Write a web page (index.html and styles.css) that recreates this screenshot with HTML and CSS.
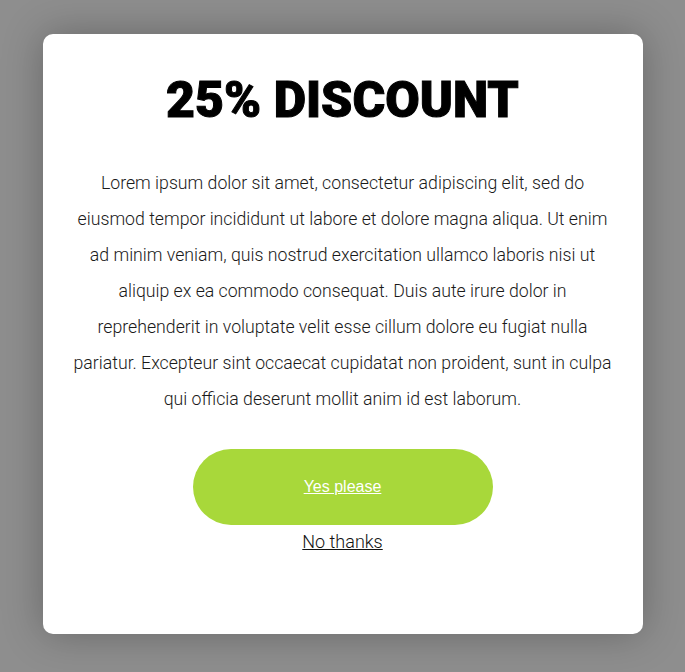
FILE: index.html
```html
<!DOCTYPE html>
<html>
<head>
<meta charset="utf-8">
<link rel="stylesheet" href="styles.css">
</head>
<body>
<div class="page">
  <div class="modal">
    <h1 class="title">25% DISCOUNT</h1>
    <p class="text">Lorem ipsum dolor sit amet, consectetur adipiscing elit, sed do eiusmod tempor incididunt ut labore et dolore magna aliqua. Ut enim ad minim veniam, quis nostrud exercitation ullamco laboris nisi ut aliquip ex ea commodo consequat. Duis aute irure dolor in reprehenderit in voluptate velit esse cillum dolore eu fugiat nulla pariatur. Excepteur sint occaecat cupidatat non proident, sunt in culpa qui officia deserunt mollit anim id est laborum.</p>
    <a class="yes" href="#">Yes please</a>
    <a class="no" href="#">No thanks</a>
  </div>
</div>
</body>
</html>
```

FILE: styles.css
```css
html, body {
  margin: 0;
  padding: 0;
  height: 100%;
  background: #8e8e8e;
}
.page {
  display: flex;
  justify-content: center;
  padding-top: 34px;
}
.modal {
  width: 600px;
  height: 600px;
  box-sizing: border-box;
  background: #fff;
  border-radius: 10px;
  box-shadow: 0 0 40px rgba(0, 0, 0, 0.28);
  padding: 0 30px;
  display: flex;
  flex-direction: column;
  align-items: center;
}
.title {
  font-family: Roboto, sans-serif;
  font-weight: 900;
  font-size: 50px;
  line-height: 60px;
  margin: 36px 0 0;
  color: #000;
  -webkit-text-stroke: 1px #000;
}
.text {
  font-family: Roboto, sans-serif;
  font-weight: 300;
  font-size: 17.7px;
  line-height: 36px;
  text-align: center;
  color: #1a1a1a;
  margin: 35px 0 0;
}
.yes {
  margin-top: 32px;
  width: 300px;
  height: 76px;
  border-radius: 38px;
  background: #a8d83a;
  color: #fff;
  font-family: "Liberation Sans", Arial, sans-serif;
  font-size: 16px;
  display: flex;
  align-items: center;
  justify-content: center;
}
.no {
  margin-top: 6px;
  font-family: Roboto, sans-serif;
  font-weight: 300;
  font-size: 18px;
  line-height: 22px;
  color: #111;
}
```
